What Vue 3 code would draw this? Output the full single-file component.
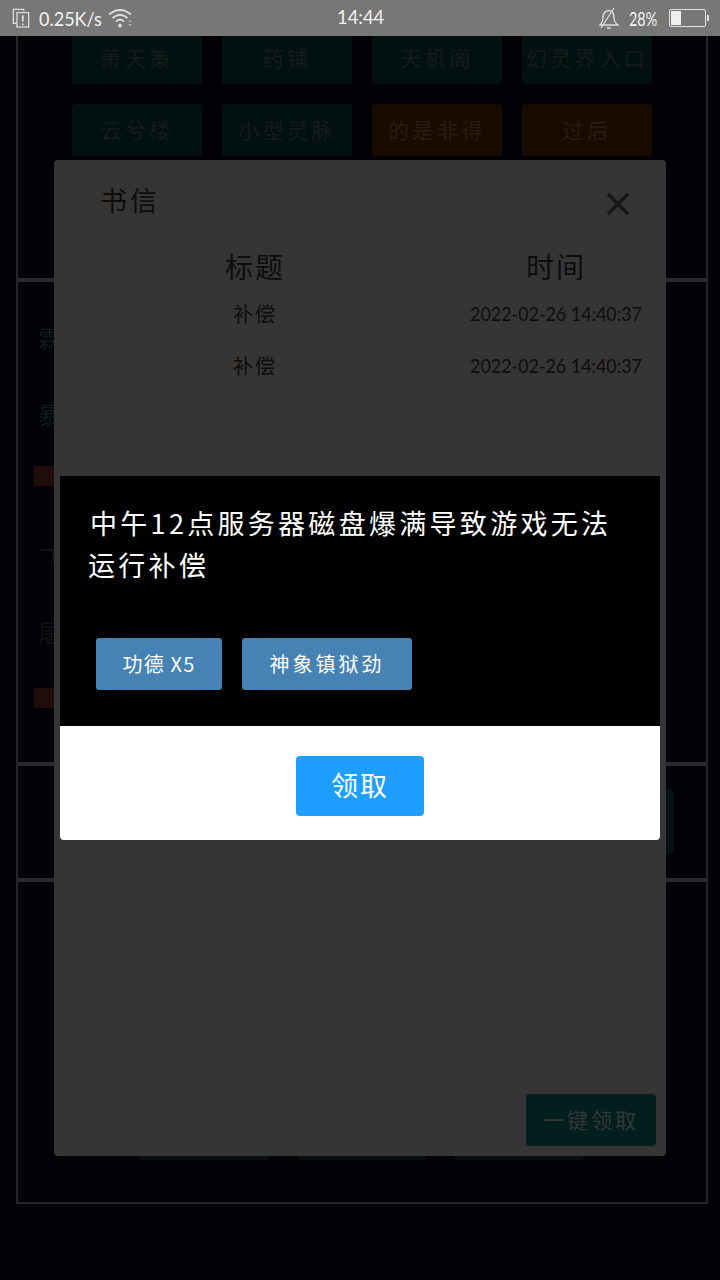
<script setup>
const topRow = [
  { label: '萧天策', warm: false },
  { label: '药铺', warm: false },
  { label: '天机阁', warm: false },
  { label: '幻灵界入口', warm: false }
]
const secondRow = [
  { label: '云兮楼', warm: false },
  { label: '小型灵脉', warm: false },
  { label: '的是非得', warm: true },
  { label: '过后', warm: true }
]
const mails = [
  { title: '补偿', time: '2022-02-26 14:40:37' },
  { title: '补偿', time: '2022-02-26 14:40:37' }
]
</script>

<template>
  <div class="screen">
    <div class="frame">
      <section class="sec sec-a">
        <div class="btn-row">
          <div v-for="b in topRow" :key="b.label" class="g-btn" :class="{ warm: b.warm }">{{ b.label }}</div>
        </div>
        <div class="btn-row">
          <div v-for="b in secondRow" :key="b.label" class="g-btn" :class="{ warm: b.warm }">{{ b.label }}</div>
        </div>
      </section>
      <section class="sec sec-b">
        <div class="side-text teal s1">霖</div>
        <div class="side-text teal s2">暴</div>
        <div class="tag t1"></div>
        <div class="side-text s3">飞</div>
        <div class="side-text s4">屠</div>
        <div class="tag"></div>
      </section>
      <section class="sec sec-c">
        <div class="teal-btn"></div>
      </section>
      <section class="sec-d">
        <div class="bottom-btn"></div>
        <div class="bottom-btn"></div>
        <div class="bottom-btn"></div>
      </section>
    </div>

    <div class="mail">
      <div class="mail-head">
        <span class="mail-title">书信</span>
        <svg class="close" width="24" height="24" viewBox="0 0 24 24"><path d="M2 2 L22 22 M22 2 L2 22" stroke="#161616" stroke-width="3.4" fill="none" /></svg>
      </div>
      <div class="mail-cols">
        <span class="col-title">标题</span>
        <span class="col-time">时间</span>
      </div>
      <div v-for="(m, i) in mails" :key="i" class="mail-row">
        <span class="col-title">{{ m.title }}</span>
        <span class="col-time">{{ m.time }}</span>
      </div>
      <div class="mail-spacer"></div>
      <div class="mail-foot"><div class="all-btn">一键领取</div></div>
    </div>

    <div class="detail">
      <div class="detail-body">
        <p class="detail-text">中午12点服务器磁盘爆满导致游戏无法运行补偿</p>
        <div class="rewards">
          <div class="reward r-a">功德 X5</div>
          <div class="reward r-b">神象镇狱劲</div>
        </div>
      </div>
      <div class="detail-foot"><div class="claim">领取</div></div>
    </div>

    <header class="status">
      <div class="st-left">
        <svg width="18" height="20" viewBox="0 0 20 22" fill="none" stroke="#ddd" stroke-width="1.4">
          <path d="M13 3.5 V1.5 H1.5 V17 H5" />
          <rect x="5.5" y="5" width="13" height="16" />
          <path d="M12 8 V15 M12 17 V19" stroke-width="1.9" />
        </svg>
        <span class="speed">0.25K/s</span>
        <svg class="wifi" width="26" height="20" viewBox="0 0 26 20" fill="none" stroke="#ddd" stroke-width="1.8">
          <path d="M1 6.5 Q12 -2.5 23 6.5" />
          <path d="M4.5 10 Q12 3.5 19.5 10" />
          <path d="M8 13.5 Q12 10 16 13.5" />
          <circle cx="12" cy="17.5" r="1.9" fill="#ddd" stroke="none" />
          <path d="M20 14 l2 -2.5 2 2.5 Z M20 16 l2 2.5 2 -2.5 Z" fill="#aaa" stroke="none" />
        </svg>
      </div>
      <span class="clock">14:44</span>
      <div class="st-right">
        <svg width="22" height="22" viewBox="0 0 22 22" fill="none" stroke="#ddd" stroke-width="1.3">
          <path d="M2 18 Q5 15 5 11 Q5 4 11 3.5 Q16 4 16 11 Q16 15 20 18 Z" />
          <path d="M9 20.5 Q11 22 13 20.5" />
          <path d="M3 21 L16 1" />
        </svg>
        <span class="pct">28%</span>
        <div class="battery"><div class="battery-fill"></div></div>
        <div class="battery-tip"></div>
      </div>
    </header>
  </div>
</template>

<style>
html, body { margin: 0; background: #020106; }
</style>

<style scoped>
.screen {
  position: relative;
  width: 720px;
  height: 1280px;
  overflow: hidden;
  background: #020106;
  font-family: "Noto Sans CJK SC", "Noto Sans", sans-serif;
}
.frame {
  box-sizing: border-box;
  margin: 0 12px 0 16px;
  height: 1204px;
  border: 2px solid #24242a;
  border-top: 0;
  display: flex;
  flex-direction: column;
}
.sec { border-bottom: 4px solid #2a2a2e; box-sizing: border-box; }
.sec-a { height: 282px; padding: 32px 0 0 54px; }
.sec-b { height: 484px; padding: 43px 0 0 16px; }
.sec-c { height: 116px; display: flex; justify-content: flex-end; padding: 22px 32px 0 0; }
.btn-row { display: flex; gap: 20px; margin-bottom: 20px; }
.g-btn {
  width: 130px;
  height: 52px;
  box-sizing: border-box;
  padding-bottom: 3px;
  border-radius: 4px;
  background: #021110;
  color: #151b1b;
  font-size: 21px;
  letter-spacing: 3.5px;
  display: flex;
  align-items: center;
  justify-content: center;
}
.g-btn.warm { background: #190b02; color: #291c12; }
.side-text { font-size: 24px; line-height: 26px; color: #111111; margin-left: 4px; }
.side-text.teal { color: #0f1a19; }
.s1 { margin-bottom: 50px; }
.s2 { margin-bottom: 39px; }
.s3 { margin-bottom: 48px; }
.s4 { margin-bottom: 43px; }
.tag { width: 100px; height: 20px; background: #1f0d0c; }
.t1 { margin-bottom: 59px; }
.teal-btn { width: 130px; height: 68px; border-radius: 8px; background: #021210; }
.sec-d { display: flex; flex: 1; align-items: flex-end; gap: 27px; padding: 0 0 42px 122px; }
.bottom-btn { width: 130px; height: 52px; background: #021110; border-radius: 4px; }
.mail {
  position: absolute;
  left: 54px;
  top: 160px;
  width: 612px;
  height: 996px;
  background: #353535;
  border-radius: 4px;
  display: flex;
  flex-direction: column;
  color: #0d0d0d;
}
.mail-head {
  height: 85px;
  box-sizing: border-box;
  padding: 22px 36px 0 46px;
  display: flex;
  justify-content: space-between;
  border-bottom: 1px solid #383838;
}
.mail-title { font-size: 27px; line-height: 36px; letter-spacing: 3px; }
.close { margin-top: 10px; }
.mail-cols, .mail-row { display: flex; text-align: center; }
.mail-cols { height: 46px; box-sizing: border-box; padding-bottom: 4px; align-items: center; font-size: 28px; letter-spacing: 2px; }
.mail-row { height: 52px; box-sizing: border-box; padding-bottom: 8px; align-items: center; }
.col-title { width: 402px; }
.col-time { width: 200px; white-space: nowrap; font-family: "Lato", sans-serif; font-size: 19px; }
.mail-cols .col-time { font-family: inherit; font-size: 28px; }
.mail-row .col-time { transform: scaleX(.94); }
.mail-row .col-title { font-size: 20px; letter-spacing: 2px; }
.mail-spacer { flex: 1; }
.mail-foot { display: flex; justify-content: flex-end; padding: 0 10px 10px 0; }
.all-btn {
  width: 130px;
  height: 52px;
  box-sizing: border-box;
  padding-bottom: 3px;
  background: #021e1d;
  border-radius: 4px;
  color: #333838;
  font-size: 21px;
  letter-spacing: 3px;
  display: flex;
  align-items: center;
  justify-content: center;
}
.detail {
  position: absolute;
  left: 60px;
  top: 476px;
  width: 600px;
  height: 364px;
  border-radius: 0 0 4px 4px;
  overflow: hidden;
  display: flex;
  flex-direction: column;
  background: #fff;
}
.detail-body { height: 250px; box-sizing: border-box; background: #000; padding: 26px 28px 0; color: #fff; }
.detail-text { margin: 0; font-size: 27px; line-height: 42px; letter-spacing: 3.3px; text-indent: 2px; }
.rewards { display: flex; gap: 20px; margin: 52px 0 0 8px; }
.reward {
  height: 52px;
  box-sizing: border-box;
  padding-bottom: 2px;
  background: #4682b4;
  border-radius: 3px;
  color: #fff;
  font-size: 20px;
  display: flex;
  align-items: center;
  justify-content: center;
}
.r-a { width: 126px; letter-spacing: 1.2px; }
.r-b { width: 170px; letter-spacing: 3px; }
.detail-foot { flex: 1; display: flex; justify-content: center; padding-top: 30px; }
.claim {
  width: 128px;
  height: 60px;
  box-sizing: border-box;
  padding-bottom: 4px;
  background: #1e9fff;
  border-radius: 4px;
  color: #fff;
  font-size: 27px;
  letter-spacing: 2px;
  display: flex;
  align-items: center;
  justify-content: center;
}
.status {
  position: absolute;
  left: 0;
  top: 0;
  width: 720px;
  height: 36px;
  background: #777;
  color: #f2f2f2;
  display: flex;
  align-items: center;
  justify-content: space-between;
  padding: 0 11px 0 12px;
  box-sizing: border-box;
  font-family: "Lato", sans-serif;
  font-size: 20px;
}
.st-left, .st-right { display: flex; align-items: center; }
.speed { width: 63px; margin-left: 9px; white-space: nowrap; transform: scaleX(.9); transform-origin: left center; }
.wifi { margin-left: 6px; }
.clock { position: absolute; left: 337px; top: 4px; transform: scaleX(.92); transform-origin: left center; }
.pct { width: 28px; margin: 0 12px 0 9px; white-space: nowrap; transform: scaleX(.72); transform-origin: left center; }
.battery { width: 37px; height: 18px; border: 1px solid #e2e2e2; border-radius: 2px; padding: 1px; box-sizing: border-box; }
.battery-fill { width: 10px; height: 100%; background: #efefef; }
.battery-tip { width: 2px; height: 6px; background: #ddd; margin-left: 1px; }
</style>
